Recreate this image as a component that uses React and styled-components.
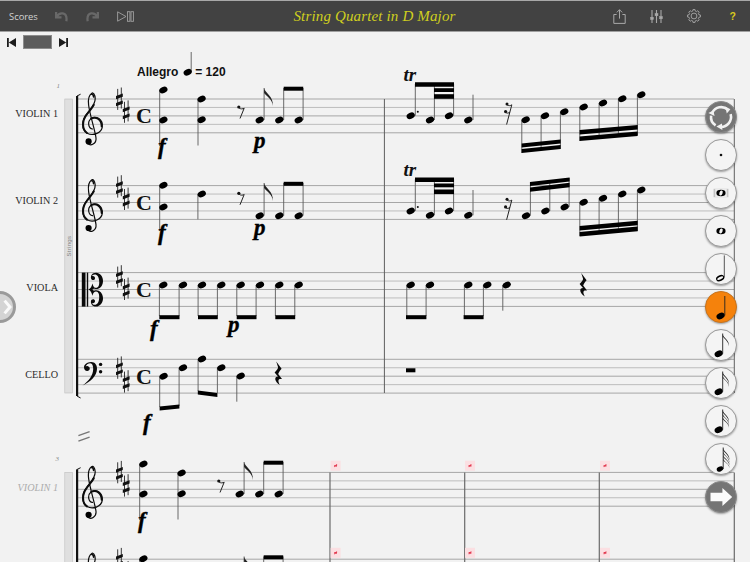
import React from "react";
import styled, { createGlobalStyle } from "styled-components";

const Global = createGlobalStyle`
  html, body { margin: 0; padding: 0; background: #f2f2f2; }
  #root { width: 750px; height: 562px; overflow: hidden; }
`;

const Page = styled.div`
  position: relative;
  width: 750px;
  height: 562px;
  overflow: hidden;
  background: #f2f2f2;
  display: flex;
  flex-direction: column;
  font-family: "Liberation Sans", Arial, sans-serif;
`;

const Toolbar = styled.header`
  box-sizing: border-box;
  height: 32px;
  flex: none;
  display: grid;
  grid-template-columns: 1fr auto 1fr;
  align-items: center;
  background: #424242;
  border-top: 1px solid #a8a8a8;
  border-bottom: 1px solid #a0a0a0;
  padding: 0 14px 0 9px;
`;

const ToolGroup = styled.div`
  display: flex;
  align-items: center;
  gap: ${(p) => p.$gap}px;
  justify-content: ${(p) => (p.$end ? "flex-end" : "flex-start")};
`;

const ScoresLabel = styled.span`
  font-family: "Open Sans", "Liberation Sans", sans-serif;
  font-size: 9.4px;
  color: #d2d2d2;
  margin-right: -1px;
`;

const Title = styled.h1`
  margin: 0;
  font-family: "Liberation Serif", serif;
  font-style: italic;
  font-weight: 400;
  font-size: 15px;
  letter-spacing: 0.15px;
  color: #cfcf1e;
  white-space: nowrap;
  transform: translateX(2px);
`;

const Help = styled.span`
  font-size: 10.5px;
  font-weight: 700;
  color: #d8c81e;
  margin-left: 5px;
`;

const ToolIcon = styled.svg`
  display: block;
  flex: none;
  fill: none;
  stroke: ${(p) => p.$tone || "#a8a8a8"};
`;

const TransportBar = styled.div`
  box-sizing: border-box;
  height: 20px;
  flex: none;
  display: flex;
  align-items: center;
  gap: 7px;
  padding-left: 7px;
`;

const Skip = styled.svg`
  display: block;
  fill: #1c1c1c;
`;

const Counter = styled.div`
  box-sizing: border-box;
  width: 29px;
  height: 14px;
  background: #5c5c5c;
  border: 1px solid #8c8c8c;
`;

const ScoreSvg = styled.svg`
  display: block;
  flex: none;
`;

const Floating = styled.div`
  position: absolute;
  top: 101px;
  right: 13px;
  display: flex;
  flex-direction: column;
  gap: 6px;
`;

const Round = styled.button`
  width: 32px;
  height: 32px;
  padding: 0;
  border-radius: 50%;
  box-sizing: border-box;
  background: ${(p) => p.$bg || "#f4f4f4"};
  border: 1px solid ${(p) => p.$edge || "#9a9a9a"};
  box-shadow: 0 1px 2px rgba(0, 0, 0, 0.35);
  display: flex;
  align-items: center;
  justify-content: center;
  overflow: hidden;
`;

const RoundIcon = styled.svg`
  display: block;
  width: 32px;
  height: 32px;
  flex: none;
`;

const Handle = styled.div`
  position: absolute;
  left: -16px;
  top: 291px;
  box-sizing: border-box;
  width: 32px;
  height: 32px;
  border-radius: 50%;
  background: #d4d4d4;
  border: 3px solid #9a9a9a;
  display: flex;
  align-items: center;
  justify-content: flex-end;
  padding-right: 1px;
`;

const PartName = styled.text`
  font-family: "Liberation Serif", serif;
  font-size: 10.2px;
  text-anchor: end;
  fill: ${(p) => (p.$ghost ? "#adadad" : "#2a2a2a")};
  font-style: ${(p) => (p.$ghost ? "italic" : "normal")};
`;

const Tempo = styled.text`
  font-family: "Liberation Sans", sans-serif;
  font-weight: 700;
  font-size: 12px;
  fill: #111;
`;

const Dynamic = styled.text`
  font-family: "Liberation Serif", serif;
  font-weight: 700;
  font-style: italic;
  font-size: 23px;
  fill: #000;
  stroke: #000;
  stroke-width: 0.35px;
`;

const Trill = styled.text`
  font-family: "Liberation Serif", serif;
  font-weight: 700;
  font-style: italic;
  font-size: 19px;
  fill: #111;
`;

const Common = styled.text`
  font-family: "Liberation Serif", serif;
  font-weight: 700;
  font-size: 22px;
  fill: #111;
`;

const BarNumber = styled.text`
  font-family: "Liberation Serif", serif;
  font-style: italic;
  font-size: 7px;
  fill: #8a8a8a;
`;

const GroupLabel = styled.text`
  font-family: "Liberation Sans", sans-serif;
  font-size: 6px;
  fill: #808080;
  letter-spacing: 0.3px;
`;

/* ---------- music drawing primitives ---------- */

const GAP = 8.45;

const Staff = ({ top }) => (
  <g>
    {[0, 1, 2, 3, 4].map((i) => (
      <line
        key={i}
        x1="78"
        x2="734"
        y1={top + i * GAP}
        y2={top + i * GAP}
        stroke={i === 1 || i === 3 ? "#bdbdbd" : "#a6a6a6"}
        strokeWidth="1"
      />
    ))}
  </g>
);

const Head = ({ x, y, open, small }) =>
  open ? (
    <g transform={`rotate(-25 ${x} ${y})`}>
      <ellipse cx={x} cy={y} rx="4.3" ry="3" fill="#000" />
      <ellipse cx={x} cy={y} rx="3.2" ry="1.3" fill="#f4f4f4" />
    </g>
  ) : (
    <ellipse
      cx={x}
      cy={y}
      rx={small ? 3.4 : 4.3}
      ry={small ? 2.4 : 3.05}
      fill="#000"
      transform={`rotate(-25 ${x} ${y})`}
    />
  );

const Stem = ({ x, y1, y2 }) => (
  <line x1={x} x2={x} y1={y1} y2={y2} stroke="#5a5a5a" strokeWidth="0.9" />
);

const Beam = ({ x1, x2, y1, y2, t = 4 }) => (
  <polygon points={`${x1},${y1} ${x2},${y2} ${x2},${y2 + t} ${x1},${y1 + t}`} fill="#000" />
);

const Up = ({ x, y, to, sx }) => (
  <g>
    <Stem x={sx ?? x + 4.4} y1={y} y2={to} />
    <Head x={x} y={y} />
  </g>
);

const Down = ({ x, y, to, sx }) => (
  <g>
    <Stem x={sx ?? x - 3.9} y1={y} y2={to} />
    <Head x={x} y={y} />
  </g>
);

const Flag = ({ x, y }) => (
  <path
    d={`M${x} ${y} C${x + 0.6} ${y + 5} ${x + 9.8} ${y + 8} ${x + 8.6} ${y + 18} C${x + 8.4} ${y + 11} ${x + 2.4} ${y + 8.4} ${x} ${y + 5} Z`}
    fill="#222"
  />
);

const Rest8 = ({ x, y }) => (
  <g>
    <circle cx={x} cy={y} r="1.6" fill="#111" />
    <path d={`M${x} ${y + 0.8} C${x + 2} ${y + 2.4} ${x + 4} ${y + 2} ${x + 5.4} ${y + 1.2} L${x + 1.2} ${y + 11.5}`} fill="none" stroke="#222" strokeWidth="1" />
  </g>
);

const Rest16 = ({ x, y }) => (
  <g>
    <circle cx={x} cy={y} r="1.5" fill="#111" />
    <circle cx={x - 1.4} cy={y + 7.6} r="1.6" fill="#111" />
    <path d={`M${x} ${y + 0.8} C${x + 1.6} ${y + 2} ${x + 3.6} ${y + 1.8} ${x + 4.8} ${y + 0.8} L${x - 0.4} ${y + 20.5} M${x - 1.4} ${y + 8.4} C${x} ${y + 9.6} ${x + 1.8} ${y + 9.2} ${x + 3} ${y + 8}`} fill="none" stroke="#222" strokeWidth="1" />
  </g>
);

const QuarterRest = ({ x, y }) => (
  <path
    d={`M${x - 0.8} ${y} L${x + 4.6} ${y + 7.2} C${x + 2.6} ${y + 9.5} ${x + 1.6} ${y + 11} ${x + 1.2} ${y + 12.6} L${x + 5} ${y + 17.6} C${x + 2} ${y + 16.8} ${x - 0.2} ${y + 18} ${x + 3} ${y + 23.6} C${x - 2.8} ${y + 20} ${x - 3} ${y + 15} ${x + 1} ${y + 15} L${x - 2.4} ${y + 11} C${x} ${y + 8.6} ${x + 1.4} ${y + 7} ${x + 1} ${y + 5.6} Z`}
    fill="#0a0a0a"
  />
);

const Sharp = ({ x, cy }) => (
  <g>
    <path d={`M${x - 1.7} ${cy - 10} V${cy + 11} M${x + 1.9} ${cy - 11.4} V${cy + 9.6}`} stroke="#222" strokeWidth="0.9" />
    <path d={`M${x - 3.4} ${cy - 2.8} L${x + 3.4} ${cy - 5.4} V${cy - 2.2} L${x - 3.4} ${cy + 0.4} Z M${x - 3.4} ${cy + 4.2} L${x + 3.4} ${cy + 1.6} V${cy + 4.8} L${x - 3.4} ${cy + 7.4} Z`} fill="#111" />
  </g>
);

const KeySig = ({ a, b }) => (
  <g>
    <Sharp x={119.4} cy={a} />
    <Sharp x={126.2} cy={b} />
  </g>
);

const Treble = ({ top }) => (
  <g transform={`translate(0 ${top - 99})`} fill="none" stroke="#0c0c0c" strokeLinecap="round">
    <path d="M92.5 129 C88.5 128.5 87 122 91 118.6 C96.5 115 103 119.5 102.3 126.8 C101.4 133.6 92.5 136.2 87.2 133.2 C81.4 129.4 81.4 120.6 86.6 114.2 C90.6 108.8 95.4 104.6 95.2 98.4 C95 94.4 93 92.2 91.8 93.2 C89 95 88 100 88.6 105 C89.8 115 95 130 96 138 C96.6 144 90.6 146.4 87.8 143.6" strokeWidth="1.2" />
    <path d="M87 133 C81.8 129.4 81.8 120.8 86.8 114.4 C89.4 110.8 92.2 108 93.8 104.8" strokeWidth="2" />
    <path d="M91 118.6 C96.5 116 101.6 120 101.6 126.4" strokeWidth="1.8" />
    <path d="M93.6 97 C93.4 95 92.6 94 91.8 94.2" strokeWidth="1.6" />
    <circle cx="88.6" cy="141.4" r="3.1" fill="#000" stroke="none" />
  </g>
);

const Alto = ({ top }) => (
  <g transform={`translate(0 ${top - 272.6})`} fill="#0a0a0a">
    <rect x="81.8" y="272.6" width="3.7" height="34" />
    <rect x="86.8" y="272.6" width="1.4" height="34" />
    <path d="M88.6 289.6 C90.6 288.4 91.8 286 92.4 283.4 C93.2 286.6 94.4 287.8 96 287.8 C98.6 287.6 99.4 285 99.2 281.4 C99 277 97.2 274.4 94.8 274.4 C93 274.4 92 275.2 92.2 276 C94 275.6 95.2 276.8 95 278.4 C94.8 280 92.8 280.4 91.6 279.4 C90.2 278 91 274.4 93.4 273.2 C98.6 271 103.2 275.6 103 281.2 C102.8 287 98.4 290 94.6 288.8 C93.6 288.4 93 288.8 92.4 289.6 C93 290.4 93.6 290.8 94.6 290.4 C98.4 289.2 102.8 292.2 103 298 C103.2 303.6 98.6 308.2 93.4 306 C91 304.8 90.2 301.2 91.6 299.8 C92.8 298.8 94.8 299.2 95 300.8 C95.2 302.4 94 303.6 92.2 303.2 C92 304 93 304.8 94.8 304.8 C97.2 304.8 99 302.2 99.2 297.8 C99.4 294.2 98.6 291.6 96 291.4 C94.4 291.4 93.2 292.6 92.4 295.8 C91.8 293.2 90.6 290.8 88.6 289.6 Z" />
  </g>
);

const Bass = ({ top }) => (
  <g transform={`translate(0 ${top - 359.3})`} fill="#0a0a0a">
    <path d="M82.6 385.4 C90.6 381.6 96.8 376 97 369 C97.2 364.6 94.6 361.8 91 362 C87 362.2 84 364.6 84 367.2 C84 369.6 86 371.6 88 370.8 C90.4 370 90.4 367 88 366.2 C87 365.8 86 366 85.6 366.6 C86.4 364.4 88.4 363.2 90.2 363.2 C92.4 363.2 93.2 366 93.2 369 C93 375.6 89 380.8 82.6 385.4 Z" />
    <circle cx="100.6" cy="364.4" r="1.7" />
    <circle cx="100.6" cy="371.8" r="1.7" />
  </g>
);

const Bar = ({ x, y1, y2, strong }) => (
  <line x1={x} x2={x} y1={y1} y2={y2} stroke={strong ? "#6a6a6a" : "#5f5f5f"} strokeWidth={strong ? 1.2 : 1} />
);

const Marker = ({ x, y }) => (
  <g>
    <rect x={x - 5} y={y - 5} width="10" height="10" fill="#fbdfe2" />
    <path d={`M${x - 1.4} ${y + 1.2} L${x + 1.4} ${y - 1.2} M${x - 1.4} ${y - 0.2} L${x + 1.4} ${y + 0.4}`} stroke="#e33a50" strokeWidth="1.1" />
  </g>
);

const StaffBracket = ({ y1, y2 }) => (
  <g>
    <path d={`M80.6 ${y1 - 2.8} L77 ${y1 - 1} V${y2 + 1} L80.6 ${y2 + 3}`} fill="none" stroke="#111" strokeWidth="1" />
    <rect x="76" y={y1 - 1} width="2.2" height={y2 - y1 + 2} fill="#111" />
  </g>
);

const Band = ({ y1, y2 }) => (
  <rect x="64.8" y={y1} width="7.6" height={y2 - y1} fill="#dfdfdf" stroke="#bdbdbd" strokeWidth="0.6" />
);

/* ---------- measures ---------- */

const Violin1First = ({ marks = "fp" }) => (
  <g>
    <Stem x={159.7} y1={90} y2={146} />
    <Head x={163.4} y={90} />
    <Head x={163.4} y={120} />
    <Stem x={198} y1={99} y2={145.5} />
    <Head x={201.6} y={99} />
    <Head x={201.6} y={119.7} />
    <Rest8 x={238.8} y={107} />
    <Up x={259.7} y={120} to={88} />
    <Flag x={264.1} y={88} />
    <Up x={279.3} y={120} to={88} />
    <Up x={298.7} y={120} to={88} />
    <Beam x1={283.7} x2={303.2} y1={86.7} y2={86.7} />
    {marks.includes("f") && <Dynamic x="158" y="153.5">f</Dynamic>}
    {marks.includes("p") && <Dynamic x="254" y="148">p</Dynamic>}
  </g>
);

const Violin2First = ({ marks = "fp" }) => (
  <g>
    <Stem x={159.7} y1={185.3} y2={231} />
    <Head x={163.4} y={185.3} />
    <Head x={163.4} y={207} />
    <Down x={201.8} y={194} to={219.3} />
    <Rest8 x={238.8} y={193.3} />
    <Up x={259.7} y={215.7} to={183} />
    <Flag x={264.1} y={183} />
    <Up x={279.3} y={215.7} to={183} />
    <Up x={298.7} y={215.7} to={183} />
    <Beam x1={283.7} x2={303.2} y1={181.8} y2={181.8} />
    {marks.includes("f") && <Dynamic x="158" y="240">f</Dynamic>}
    {marks.includes("p") && <Dynamic x="254" y="235">p</Dynamic>}
  </g>
);

const ViolinSecondBar = ({ dy, children }) => (
  <g transform={`translate(0 ${dy})`}>
    <Up x={410.7} y={115.7} to={84} sx={415.3} />
    <circle cx="417.8" cy="111.8" r="1" fill="#111" />
    <Up x={430} y={120} to={84} sx={434.4} />
    <Up x={449} y={115.7} to={84} sx={453.6} />
    <Beam x1={415} x2={454} y1={82.3} y2={82.3} t={4.4} />
    <Beam x1={434} x2={454} y1={88.2} y2={88.2} t={3.8} />
    <Beam x1={434} x2={454} y1={94.2} y2={94.2} t={4.6} />
    <Up x={468.3} y={120} to={94.7} sx={473} />
    <Trill x="403.5" y="81">tr</Trill>
    <Rest16 x={507} y={104} />
    {children}
  </g>
);

const Violin1Runs = () => (
  <g>
    <Down x={525.7} y={119.7} to={153} />
    <Down x={545} y={115.7} to={150} />
    <Down x={564.3} y={111.7} to={149} />
    <Beam x1={521.6} x2={560.6} y1={143.4} y2={139.4} />
    <Beam x1={521.6} x2={560.6} y1={149} y2={145} />
    <Down x={583.7} y={107} to={141} />
    <Down x={603} y={103} to={138} />
    <Down x={622.3} y={98.7} to={136} />
    <Down x={641.3} y={94.7} to={135} />
    <Beam x1={579.6} x2={637.7} y1={130} y2={125} t={4.4} />
    <Beam x1={579.6} x2={637.7} y1={136.6} y2={131.4} t={4.5} />
  </g>
);

const Violin2Runs = () => (
  <g>
    <Up x={526} y={215.7} to={182} />
    <Up x={545.4} y={211} to={180} />
    <Up x={564.7} y={207} to={178} />
    <Beam x1={530} x2={569.6} y1={182} y2={177.4} />
    <Beam x1={530} x2={569.6} y1={187.4} y2={182.8} t={4.4} />
    <Down x={583.7} y={202.3} to={236} />
    <Down x={603} y={198.3} to={234} />
    <Down x={622.3} y={194} to={232} />
    <Down x={641.3} y={190} to={231} />
    <Beam x1={579.6} x2={637.7} y1={226} y2={220.8} t={4.4} />
    <Beam x1={579.6} x2={637.7} y1={232} y2={226.6} t={4.6} />
  </g>
);

const violaFirst = [163.3, 183, 202, 221.3, 240.7, 260, 279.3, 298.7];

const Viola = () => (
  <g>
    {violaFirst.map((x) => (
      <Down key={x} x={x} y={285} to={316} />
    ))}
    {[0, 2, 4, 6].map((i) => (
      <Beam key={i} x1={violaFirst[i] - 4} x2={violaFirst[i + 1] - 3.5} y1={315.2} y2={315.2} />
    ))}
    <Dynamic x="150" y="335.5">f</Dynamic>
    <Dynamic x="228" y="332">p</Dynamic>
    <Down x={410.7} y={285} to={316} />
    <Down x={430} y={285} to={316} />
    <Beam x1={406} x2={426.4} y1={315.2} y2={315.2} />
    <Down x={468.3} y={285} to={316} />
    <Down x={487.3} y={285} to={316} />
    <Beam x1={463.6} x2={483.6} y1={315.2} y2={315.2} />
    <Down x={506.7} y={285} to={310.7} />
    <QuarterRest x={582} y={273} />
  </g>
);

const Cello = () => (
  <g>
    <Down x={163.6} y={376.3} to={407} />
    <Down x={183} y={367.7} to={406} />
    <Beam x1={159.6} x2={179.4} y1={406.6} y2={404.6} />
    <Down x={202} y={359} to={391} />
    <Down x={221.3} y={367.7} to={393} />
    <Beam x1={197.8} x2={217.4} y1={390.6} y2={393} />
    <Down x={240.7} y={376} to={401.7} />
    <QuarterRest x={277} y={361.5} />
    <Dynamic x="143" y="430">f</Dynamic>
    <rect x="406" y="368.3" width="9.4" height="4" fill="#000" />
  </g>
);

const SCORE_TOPS = [99, 185.6, 272.6, 359.3, 472.4, 559.2];

const Score = () => (
  <ScoreSvg width="750" height="510" viewBox="0 52 750 510">
    <Tempo x="137" y="76">Allegro</Tempo>
    <Stem x={191.2} y1={52} y2={72} />
    <Head x={187.7} y={72.3} />
    <Tempo x="195.2" y="76">= 120</Tempo>

    <BarNumber x="56.5" y="88">1</BarNumber>
    <BarNumber x="55.5" y="461">3</BarNumber>

    <PartName x="58" y="116.5">VIOLIN 1</PartName>
    <PartName x="58" y="203.5">VIOLIN 2</PartName>
    <PartName x="58" y="290.5">VIOLA</PartName>
    <PartName x="58" y="377.5">CELLO</PartName>
    <PartName x="58" y="490.5" $ghost>VIOLIN 1</PartName>

    <Band y1={99} y2={393} />
    <Band y1={472.4} y2={570} />
    <GroupLabel transform="translate(71 256.5) rotate(-90)">Strings</GroupLabel>

    {SCORE_TOPS.map((t) => (
      <Staff key={t} top={t} />
    ))}

    <StaffBracket y1={97} y2={395} />
    <StaffBracket y1={470.5} y2={600} />

    <Bar x={384.4} y1={99} y2={393} />
    <Bar x={734.3} y1={99} y2={393} />
    {[330, 464.7, 599.3, 734.3].map((x) => (
      <Bar key={x} x={x} y1={472.4} y2={562} strong />
    ))}
    {[335.6, 470, 605].map((x) => (
      <g key={x}>
        <Marker x={x} y={465.7} />
        <Marker x={x} y={552.8} />
      </g>
    ))}

    <Treble top={99} />
    <Treble top={185.6} />
    <Alto top={272.6} />
    <Bass top={359.3} />
    <Treble top={472.4} />
    <Treble top={559.2} />

    <KeySig a={98.9} b={111.8} />
    <KeySig a={186.6} b={199} />
    <KeySig a={276.6} b={289} />
    <KeySig a={367.8} b={381.6} />
    <KeySig a={472.3} b={485.6} />
    <KeySig a={559.3} b={572.5} />

    {SCORE_TOPS.slice(0, 4).map((t) => (
      <Common key={t} x="136" y={t + 24.2}>C</Common>
    ))}

    <Violin1First />
    <Violin2First />
    <ViolinSecondBar dy={0}><Violin1Runs /></ViolinSecondBar>
    <ViolinSecondBar dy={95.3}><g transform="translate(0 -95.3)"><Violin2Runs /></g></ViolinSecondBar>
    <Viola />
    <Cello />

    <path d="M78.4 435.6 L89.6 431.6 M78.4 441.2 L89.6 437.2" stroke="#777" strokeWidth="1.4" />

    <g transform="translate(-20 374)"><Violin1First marks="f" /></g>
    <g transform="translate(-20 373.5)"><Violin2First marks="" /></g>
  </ScoreSvg>
);

/* ---------- toolbar icons ---------- */

const Undo = ({ flip }) => (
  <ToolIcon width="13" height="11" viewBox="0 0 14 11" style={flip ? { transform: "scaleX(-1)" } : undefined} $tone="#686868">
    <path d="M1.2 0.6 V6.4 H7 M1.8 5.8 C3.6 2.6 6 1.8 8.4 2.2 C11.4 2.8 13 5.6 12.2 10.6" strokeWidth="2.4" />
  </ToolIcon>
);

const PlayBars = () => (
  <ToolIcon width="17" height="11" viewBox="0 0 17 11" $tone="#a0a0a0">
    <path d="M0.6 0.8 L9 5.5 L0.6 10.2 Z" strokeWidth="0.9" />
    <rect x="10.5" y="0.7" width="2.4" height="9.6" strokeWidth="0.9" />
    <rect x="14" y="0.7" width="2.4" height="9.6" strokeWidth="0.9" />
  </ToolIcon>
);

const ShareIcon = () => (
  <ToolIcon width="13" height="15" viewBox="0 0 13 15">
    <path d="M3.6 5.5 H0.8 V14.4 H12.2 V5.5 H9.4 M6.5 0.8 V9.6 M3.8 3.4 L6.5 0.7 L9.2 3.4" strokeWidth="1" />
  </ToolIcon>
);

const SlidersIcon = () => (
  <ToolIcon width="13" height="13" viewBox="0 0 13 13">
    <path d="M2 0 V13 M6.5 0 V13 M11 0 V13" strokeWidth="1.1" />
    <rect x="0.5" y="7.2" width="3" height="2.4" fill="#a8a8a8" strokeWidth="0.4" />
    <rect x="5" y="3.4" width="3" height="2.4" fill="#a8a8a8" strokeWidth="0.4" />
    <rect x="9.5" y="6.4" width="3" height="2.4" fill="#a8a8a8" strokeWidth="0.4" />
  </ToolIcon>
);

const GearIcon = () => {
  const d = [];
  for (let i = 0; i < 8; i++) {
    const a = (i * Math.PI) / 4;
    const p = (r, o) => `${(7 + r * Math.cos(a + o)).toFixed(2)} ${(7 + r * Math.sin(a + o)).toFixed(2)}`;
    d.push(`${i ? "L" : "M"}${p(5.1, -0.24)} L${p(6.5, -0.16)} L${p(6.5, 0.16)} L${p(5.1, 0.24)}`);
  }
  return (
    <ToolIcon width="14" height="14" viewBox="0 0 14 14">
      <path d={`${d.join(" ")} Z`} strokeWidth="0.9" />
      <circle cx="7" cy="7" r="2.9" strokeWidth="0.9" />
    </ToolIcon>
  );
};

/* ---------- round palette ---------- */

const FlaggedNote = ({ flags, small }) => {
  const hx = small ? -1 : -2.3;
  const hy = small ? 10 : 8.7;
  const sx = hx + (small ? 3.2 : 4);
  return (
    <g>
      <Head x={hx} y={hy} small={small} />
      <line x1={sx} x2={sx} y1={hy} y2={-11.5} stroke="#222" strokeWidth="0.9" />
      {Array.from({ length: flags }).map((_, i) => (
        <path
          key={i}
          d={`M${sx} ${-11 + i * 3.4} C${sx + 0.5} ${-7 + i * 3.4} ${sx + 7} ${-5 + i * 3.2} ${sx + 6.2} ${1.5 + i * 2.6} C${sx + 6} ${-3.5 + i * 3} ${sx + 2} ${-6 + i * 3.2} ${sx} ${-8.6 + i * 3.4} Z`}
          fill="#222"
        />
      ))}
    </g>
  );
};

const WholeNote = () => (
  <g>
    <ellipse cx="0" cy="0" rx="4.6" ry="3.2" fill="#000" />
    <ellipse cx="0" cy="0" rx="1.6" ry="2.6" fill="#f4f4f4" transform="rotate(20)" />
  </g>
);

const paletteDrawings = [
  <g key="refresh" fill="none" stroke="#f1f1f1" strokeWidth="2.6">
    <path d="M-8.6 -4.6 A10 10 0 0 1 6.6 -7.6" />
    <path d="M9.6 -2.8 A10 10 0 0 1 -1 9.9" />
    <path d="M-5.4 8.4 A10 10 0 0 1 -9.9 -1.4" />
    <path d="M4.2 -10.6 L9.4 -7.8 L5.8 -3.6 Z" fill="#f1f1f1" stroke="none" />
    <path d="M1 6.4 L-4.6 9.6 L1.4 13 Z" fill="#f1f1f1" stroke="none" />
    <path d="M-12.6 -4 L-7.6 -6.6 L-6.4 -1 Z" fill="#f1f1f1" stroke="none" />
  </g>,
  <circle key="dot" cx="0" cy="0" r="1.3" fill="#111" />,
  <g key="breve">
    <rect x="-7.4" y="-4.2" width="14.8" height="8.4" fill="#c4c4c4" />
    <rect x="-5.8" y="-4.2" width="11.6" height="8.4" fill="#ececec" />
    <WholeNote />
  </g>,
  <WholeNote key="whole" />,
  <g key="half">
    <Head x={-0.8} y={9.1} open />
    <line x1="3.3" x2="3.3" y1="8.4" y2="-13.6" stroke="#444" strokeWidth="0.9" />
  </g>,
  <g key="quarter">
    <Head x={-0.4} y={8.9} />
    <line x1="3.8" x2="3.8" y1="8.4" y2="-11" stroke="#222" strokeWidth="0.9" />
  </g>,
  <FlaggedNote key="8" flags={1} />,
  <FlaggedNote key="16" flags={2} />,
  <FlaggedNote key="32" flags={3} />,
  <FlaggedNote key="64" flags={4} small />,
  <path key="arrow" d="M-10.5 -4.2 H1.4 V-9 L11.2 0 L1.4 9 V4.2 H-10.5 Z" fill="#fbfbfb" />,
];

const tones = [
  { bg: "#757575", edge: "#8a8a8a" },
  {}, {}, {}, {},
  { bg: "#f5820c", edge: "#c9741d" },
  {}, {}, {}, {},
  { bg: "#757575", edge: "#8a8a8a" },
];

export default function App() {
  return (
    <Page>
      <Global />
      <Toolbar>
        <ToolGroup $gap={18}>
          <ScoresLabel>Scores</ScoresLabel>
          <Undo />
          <Undo flip />
          <PlayBars />
        </ToolGroup>
        <Title>String Quartet in D Major</Title>
        <ToolGroup $gap={24} $end>
          <ShareIcon />
          <SlidersIcon />
          <GearIcon />
          <Help>?</Help>
        </ToolGroup>
      </Toolbar>
      <TransportBar>
        <Skip width="9" height="9" viewBox="0 0 9 9">
          <path d="M0 0 H1.8 V9 H0 Z M9 0 V9 L1.8 4.5 Z" />
        </Skip>
        <Counter />
        <Skip width="9" height="9" viewBox="0 0 9 9">
          <path d="M9 0 H7.2 V9 H9 Z M0 0 V9 L7.2 4.5 Z" />
        </Skip>
      </TransportBar>
      <Score />
      <Handle>
        <svg width="9" height="16" viewBox="0 0 9 16">
          <path d="M1.6 1.6 L7 8 L1.6 14.4" fill="none" stroke="#fafafa" strokeWidth="3" />
        </svg>
      </Handle>
      <Floating>
        {paletteDrawings.map((drawing, i) => (
          <Round key={i} $bg={tones[i].bg} $edge={tones[i].edge}>
            <RoundIcon viewBox="-16 -16 32 32">{drawing}</RoundIcon>
          </Round>
        ))}
      </Floating>
    </Page>
  );
}
